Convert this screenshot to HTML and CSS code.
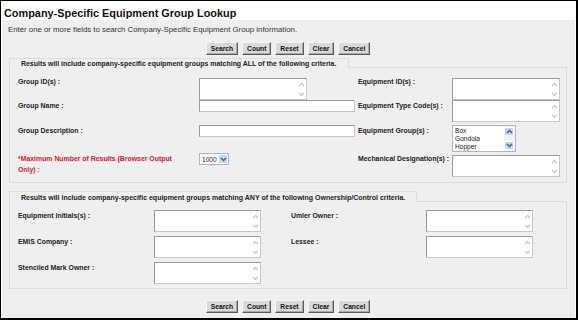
FILE: index.html
```html
<!DOCTYPE html>
<html>
<head>
  <title>Company-Specific Equipment Group Lookup</title>
  <link rel="stylesheet" href="styles.css">
</head>
<body>
<div class="frame">
  <h1 class="title">Company-Specific Equipment Group Lookup</h1>

  <div class="panel">
    <p class="intro">Enter one or more fields to search Company-Specific Equipment Group information.</p>

    <div class="buttons">
      <button>Search</button><button>Count</button><button>Reset</button><button>Clear</button><button>Cancel</button>
    </div>

    <!-- ALL criteria -->
    <div class="group">
      <div class="group-head">
        <div class="tab tab-all">Results will include company-specific equipment groups matching ALL of the following criteria.</div>
        <div class="fill"></div>
      </div>
      <div class="group-body grid-all">
        <label class="first">Group ID(s) :</label>
        <div class="ta"><textarea></textarea><span class="sb"><svg width="7" height="5"><path d="M1 4 L3.5 1.5 L6 4" fill="none" stroke="#c6c6c6" stroke-width="1.2"/></svg><svg width="7" height="5"><path d="M1 1 L3.5 3.5 L6 1" fill="none" stroke="#c6c6c6" stroke-width="1.2"/></svg></span></div>
        <label class="first">Equipment ID(s) :</label>
        <div class="ta"><textarea></textarea><span class="sb"><svg width="7" height="5"><path d="M1 4 L3.5 1.5 L6 4" fill="none" stroke="#c6c6c6" stroke-width="1.2"/></svg><svg width="7" height="5"><path d="M1 1 L3.5 3.5 L6 1" fill="none" stroke="#c6c6c6" stroke-width="1.2"/></svg></span></div>

        <label>Group Name :</label>
        <div><input type="text" class="txt"></div>
        <label>Equipment Type Code(s) :</label>
        <div class="ta"><textarea></textarea><span class="sb"><svg width="7" height="5"><path d="M1 4 L3.5 1.5 L6 4" fill="none" stroke="#c6c6c6" stroke-width="1.2"/></svg><svg width="7" height="5"><path d="M1 1 L3.5 3.5 L6 1" fill="none" stroke="#c6c6c6" stroke-width="1.2"/></svg></span></div>

        <label>Group Description :</label>
        <div><input type="text" class="txt"></div>
        <label>Equipment Group(s) :</label>
        <div class="list">
          <div class="opts"><div>Box</div><div>Gondola</div><div>Hopper</div></div>
          <div class="list-sb">
            <span class="xp-btn"><svg width="7" height="5"><path d="M1 4 L3.5 1.5 L6 4" fill="none" stroke="#4d6185" stroke-width="1.5"/></svg></span>
            <span class="xp-btn"><svg width="7" height="5"><path d="M1 1 L3.5 3.5 L6 1" fill="none" stroke="#4d6185" stroke-width="1.5"/></svg></span>
          </div>
        </div>

        <label class="req">*Maximum Number of Results (Browser Output Only) :</label>
        <div><div class="dropdown"><span>1000</span><span class="xp-btn"><svg width="7" height="5"><path d="M1 1 L3.5 3.5 L6 1" fill="none" stroke="#4d6185" stroke-width="1.5"/></svg></span></div></div>
        <label>Mechanical Designation(s) :</label>
        <div class="ta ta-low"><textarea></textarea><span class="sb"><svg width="7" height="5"><path d="M1 4 L3.5 1.5 L6 4" fill="none" stroke="#c6c6c6" stroke-width="1.2"/></svg><svg width="7" height="5"><path d="M1 1 L3.5 3.5 L6 1" fill="none" stroke="#c6c6c6" stroke-width="1.2"/></svg></span></div>
      </div>
    </div>

    <!-- ANY criteria -->
    <div class="group group-any">
      <div class="group-head">
        <div class="tab tab-any">Results will include company-specific equipment groups matching ANY of the following Ownership/Control criteria.</div>
        <div class="fill"></div>
      </div>
      <div class="group-body grid-any">
        <label>Equipment Initials(s) :</label>
        <div class="ta"><textarea></textarea><span class="sb"><svg width="7" height="5"><path d="M1 4 L3.5 1.5 L6 4" fill="none" stroke="#c6c6c6" stroke-width="1.2"/></svg><svg width="7" height="5"><path d="M1 1 L3.5 3.5 L6 1" fill="none" stroke="#c6c6c6" stroke-width="1.2"/></svg></span></div>
        <label>Umler Owner :</label>
        <div class="ta"><textarea></textarea><span class="sb"><svg width="7" height="5"><path d="M1 4 L3.5 1.5 L6 4" fill="none" stroke="#c6c6c6" stroke-width="1.2"/></svg><svg width="7" height="5"><path d="M1 1 L3.5 3.5 L6 1" fill="none" stroke="#c6c6c6" stroke-width="1.2"/></svg></span></div>

        <label>EMIS Company :</label>
        <div class="ta"><textarea></textarea><span class="sb"><svg width="7" height="5"><path d="M1 4 L3.5 1.5 L6 4" fill="none" stroke="#c6c6c6" stroke-width="1.2"/></svg><svg width="7" height="5"><path d="M1 1 L3.5 3.5 L6 1" fill="none" stroke="#c6c6c6" stroke-width="1.2"/></svg></span></div>
        <label>Lessee :</label>
        <div class="ta"><textarea></textarea><span class="sb"><svg width="7" height="5"><path d="M1 4 L3.5 1.5 L6 4" fill="none" stroke="#c6c6c6" stroke-width="1.2"/></svg><svg width="7" height="5"><path d="M1 1 L3.5 3.5 L6 1" fill="none" stroke="#c6c6c6" stroke-width="1.2"/></svg></span></div>

        <label>Stenciled Mark Owner :</label>
        <div class="ta"><textarea></textarea><span class="sb"><svg width="7" height="5"><path d="M1 4 L3.5 1.5 L6 4" fill="none" stroke="#c6c6c6" stroke-width="1.2"/></svg><svg width="7" height="5"><path d="M1 1 L3.5 3.5 L6 1" fill="none" stroke="#c6c6c6" stroke-width="1.2"/></svg></span></div>
      </div>
    </div>

    <div class="buttons buttons-bottom">
      <button>Search</button><button>Count</button><button>Reset</button><button>Clear</button><button>Cancel</button>
    </div>
  </div>
</div>
</body>
</html>
```

FILE: styles.css
```css
body { margin: 0; font-family: "Liberation Sans", Arial, sans-serif; color: #222; }
.frame {
  width: 578px; height: 320px; box-sizing: border-box;
  border: 1px solid #000; border-right-width: 2px; border-bottom-width: 2px;
  background: #fff; display: flex; flex-direction: column;
}
.title { margin: 0; height: 19px; padding: 5px 0 0 3px; box-sizing: border-box; font-size: 10.9px; line-height: 14px; font-weight: bold; color: #111; }

.panel { flex: 1; margin: 0 1px; background: #efefef; padding: 5px 8px 0 7px; }
.intro { margin: 0 0 0 -1px; font-size: 7.8px; line-height: 10px; color: #333; }

.buttons { display: flex; justify-content: center; gap: 4px; margin-top: 7px; padding-left: 0; }
.buttons-bottom { margin-top: 11px; }
button {
  height: 13px; padding: 0 4px; font-family: inherit; font-size: 6.7px; font-weight: bold; color: #111;
  background: #dadada; border: 1px solid; border-color: #f6f6f6 #5a5a5a #5a5a5a #f6f6f6;
  box-shadow: inset -1px -1px 0 #a8a8a8; line-height: 10px;
}

.group { margin-top: 3px; }
.group-any { margin-top: 8px; }
.group-head { display: flex; height: 10px; }
.group-any .group-head { height: 11px; }
.tab {
  border: 1px solid #dcdcdc; border-bottom: none; padding: 0 0 0 11px; line-height: 10px;
  font-size: 6.95px; font-weight: bold; color: #222; white-space: nowrap; box-sizing: border-box;
}
.group-any .tab { line-height: 11px; font-size: 7px; }
.tab-all { width: 340px; }
.tab-any { width: 408px; }
.fill { flex: 1; border-bottom: 1px solid #dcdcdc; }
.group-body { border: 1px solid #dcdcdc; border-top: none; padding: 10px 0 5px 8px; }

.grid-all { display: grid; grid-template-columns: 181px 159px 94px 106px; grid-template-rows: 22px 25px 28px 24px; }
.grid-any { display: grid; grid-template-columns: 136px 137px 135px 107px; grid-template-rows: 26px 26px 26px; padding-top: 8px; padding-bottom: 0; }

label { font-size: 6.9px; font-weight: bold; line-height: 11px; color: #222; }
label.first { margin-top: -2px; }
label.req { color: #d4202a; padding-right: 14px; }

.ta { display: flex; width: 108px; height: 22px; box-sizing: border-box; background: #fff; border: 1px solid #9a9a9a; border-right-color: #c8c8c8; border-bottom-color: #c8c8c8; }
.grid-any .ta { width: 107px; }
.ta-low { margin-top: 2px; }
.ta textarea { flex: 1; border: none; resize: none; padding: 0; margin: 0; outline: none; background: transparent; min-width: 0; }
.sb { width: 10px; display: flex; flex-direction: column; justify-content: space-between; align-items: center; padding: 3px 0 2px; box-sizing: border-box; }

.txt { width: 156px; height: 12px; box-sizing: border-box; border: 1px solid #9a9a9a; border-right-color: #c8c8c8; border-bottom-color: #c8c8c8; padding: 0; margin: 0; background: #fff; display: block; }

.list { display: flex; width: 64px; height: 27px; box-sizing: border-box; border: 1px solid #a9b8c9; background: #fff; }
.opts { flex: 1; font-size: 6.6px; line-height: 8px; padding: 1px 0 0 2px; color: #222; }
.list-sb { width: 11px; background: #f3f3ee; display: flex; flex-direction: column; justify-content: space-between; padding: 1px 0; }
.xp-btn { display: flex; align-items: center; justify-content: center; width: 10px; height: 9px; background: #c3d4fb; border: 1px solid #fff; border-radius: 1px; box-sizing: border-box; }

.dropdown { display: flex; align-items: center; justify-content: space-between; width: 30px; height: 12px; box-sizing: border-box; border: 1px solid #a9b8c9; background: #fff; font-size: 6.6px; padding-left: 2px; }
.dropdown .xp-btn { height: 10px; }
```
